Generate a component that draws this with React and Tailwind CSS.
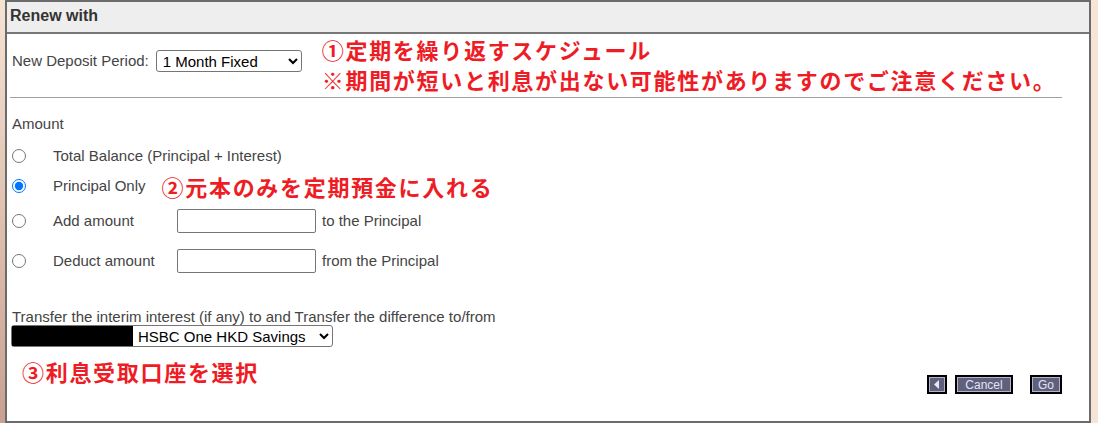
import React from 'react'

const jp = { fontFamily: '"Noto Sans CJK JP", sans-serif' }

function PixelButton({ children, className = '' }) {
  return (
    <div className={`border-2 border-black bg-black ${className}`}>
      <div className="h-full border border-[#b4b4c4] bg-[#5f5f7e] flex items-center justify-center text-[12px] leading-none text-[#e4e4ee] px-[4px]">
        {children}
      </div>
    </div>
  )
}

function Radio({ checked }) {
  return (
    <input
      type="radio"
      name="amount"
      defaultChecked={checked}
      className="m-0 w-[14px] h-[14px] accent-[#0075ff]"
    />
  )
}

export default function App() {
  return (
    <div className="w-[1098px] h-[430px] bg-white text-[15px] text-[#444]" style={{ fontFamily: '"Liberation Sans", Arial, sans-serif' }}>
      <div className="flex h-[423px]">
        {/* left page strip */}
        <div className="w-[5px] bg-gradient-to-b from-[#f6e4d3] to-[#c9a091]" />

        {/* panel */}
        <div className="w-[1086px] border-2 border-[#6b6b6b] flex flex-col">
          <div className="h-[32px] bg-[#eeeeee] border-b-2 border-[#777] px-[3px] pt-[2px]">
            <span className="text-[16px] font-bold text-[#333]">Renew with</span>
          </div>

          <div className="flex flex-col px-[5px]">
            {/* period row */}
            <div className="flex items-start">
              <div className="flex items-center mt-[16px] h-[22px]">
                <span>New Deposit Period:</span>
                <select className="ml-[7px] w-[146px] h-[22px] border border-[#767676] rounded-[3px] bg-white text-black text-[15px] pl-[2px]">
                  <option>1 Month Fixed</option>
                </select>
              </div>
              <div className="ml-[20px] text-[22px] tracking-[1.7px] leading-[30px] font-bold text-[#ee1c25]" style={jp}>
                <div>①定期を繰り返すスケジュール</div>
                <div>※期間が短いと利息が出ない可能性がありますのでご注意ください。</div>
              </div>
            </div>
            <div className="mt-[3px] ml-[-2px] w-[1052px] h-px bg-[#a0a0a0]" />

            <div className="mt-[18px] leading-[16px]">Amount</div>

            {/* radio rows */}
            <div className="flex flex-col">
              <div className="flex items-center h-[24px] mt-[12px]">
                <div className="w-[41px] flex"><Radio /></div>
                <span>Total Balance (Principal + Interest)</span>
              </div>
              <div className="flex items-center h-[30px] mt-[3px]">
                <div className="w-[41px] flex"><Radio checked /></div>
                <span>Principal Only</span>
                <span className="ml-[16px] text-[22px] tracking-[1.7px] font-bold text-[#ee1c25]" style={jp}>②元本のみを定期預金に入れる</span>
              </div>
              <div className="flex items-center h-[24px] mt-[8px]">
                <div className="w-[41px] flex"><Radio /></div>
                <span className="w-[124px]">Add amount</span>
                <input type="text" className="w-[139px] h-[24px] border border-[#767676] rounded-[2px] bg-white" />
                <span className="ml-[6px]">to the Principal</span>
              </div>
              <div className="flex items-center h-[24px] mt-[16px]">
                <div className="w-[41px] flex"><Radio /></div>
                <span className="w-[124px]">Deduct amount</span>
                <input type="text" className="w-[139px] h-[24px] border border-[#767676] rounded-[2px] bg-white" />
                <span className="ml-[6px]">from the Principal</span>
              </div>
            </div>

            <div className="mt-[36px] leading-[16px]">Transfer the interim interest (if any) to and Transfer the difference to/from</div>
            <div className="relative w-[322px] h-[22px] ml-[-1px]">
              <select className="w-full h-full border border-[#767676] rounded-[3px] bg-white text-black text-[15px] pl-[122px]">
                <option>HSBC One HKD Savings</option>
              </select>
              <div className="absolute left-[1px] top-[1px] w-[121px] h-[20px] bg-black" />
            </div>

            <div className="flex items-start justify-between">
              <div className="ml-[10px] mt-[10px] text-[22px] tracking-[1.7px] leading-[28px] font-bold text-[#ee1c25]" style={jp}>③利息受取口座を選択</div>
              <div className="flex items-start mt-[28px] mr-[22px]">
                <PixelButton className="w-[20px] h-[19px]">
                  <svg width="6" height="9" viewBox="0 0 6 9"><path d="M5 0 L0 4.5 L5 9 Z" fill="#e8e8f0" /></svg>
                </PixelButton>
                <PixelButton className="ml-[8px] w-[58px] h-[19px]">Cancel</PixelButton>
                <PixelButton className="ml-[17px] w-[32px] h-[19px]">Go</PixelButton>
              </div>
            </div>
          </div>
        </div>

        {/* right page strip */}
        <div className="w-[7px] bg-[#f6e4d6]" />
      </div>
    </div>
  )
}
